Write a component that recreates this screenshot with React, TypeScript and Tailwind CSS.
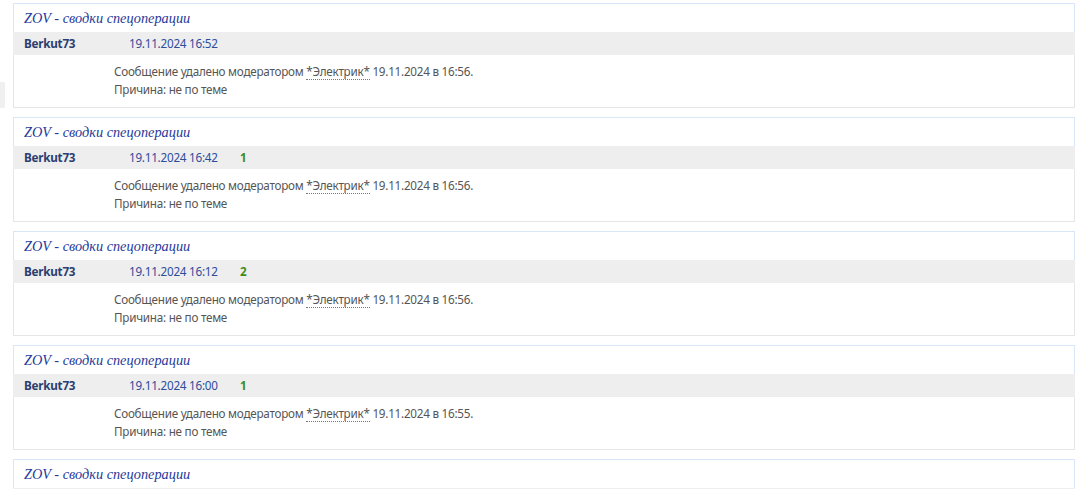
import React from "react";

type Post = {
  author: string;
  date: string;
  likes?: number;
  deletedAt: string;
};

const posts: Post[] = [
  { author: "Berkut73", date: "19.11.2024 16:52", deletedAt: "19.11.2024 в 16:56." },
  { author: "Berkut73", date: "19.11.2024 16:42", likes: 1, deletedAt: "19.11.2024 в 16:56." },
  { author: "Berkut73", date: "19.11.2024 16:12", likes: 2, deletedAt: "19.11.2024 в 16:56." },
  { author: "Berkut73", date: "19.11.2024 16:00", likes: 1, deletedAt: "19.11.2024 в 16:55." },
  { author: "Berkut73", date: "19.11.2024 15:48", deletedAt: "19.11.2024 в 16:55." },
];

function PostCard({ post }: { post: Post }) {
  return (
    <div className="flex flex-col">
      <div className="h-[29px] border border-b-0 border-[#d9e6f7] pl-[10px] pt-[1px]">
        <a
          className="text-[14.3px] italic leading-[18px] text-[#25399a]"
          style={{ fontFamily: "Georgia, 'Liberation Serif', serif" }}
        >
          ZOV - сводки спецоперации
        </a>
      </div>
      <div className="flex h-[23px] items-center bg-[#eeeeee] pl-[11px] text-[11.7px] tracking-[-0.25px]">
        <span className="w-[105px] font-bold text-[#2c3e70]">{post.author}</span>
        <span className="w-[111px] text-[#2d4c9c]">{post.date}</span>
        {post.likes != null && <span className="font-bold text-[#3d8c1c]">{post.likes}</span>}
      </div>
      <div className="h-[53px] border border-t-0 border-[#e6e6e6] pl-[100px] pt-[7px] text-[11.7px] leading-[18px] tracking-[-0.25px] text-[#555555]">
        <div>
          Сообщение удалено модератором{" "}
          <span className="border-b border-dotted border-[#777777]">*Электрик*</span> {post.deletedAt}
        </div>
        <div>Причина: не по теме</div>
      </div>
    </div>
  );
}

export default function App() {
  return (
    <div
      className="flex h-[489px] overflow-hidden bg-white"
      style={{ fontFamily: "'Segoe UI', 'Noto Sans', 'Open Sans', sans-serif" }}
    >
      <div className="w-[13px] shrink-0">
        <div className="mt-[82px] h-[26px] w-[5px] bg-[#f0f0f0]" />
      </div>
      <div className="flex w-[1062px] shrink-0 flex-col gap-[9px] pt-[3px]">
        {posts.map((p, i) => (
          <PostCard key={i} post={p} />
        ))}
      </div>
    </div>
  );
}
